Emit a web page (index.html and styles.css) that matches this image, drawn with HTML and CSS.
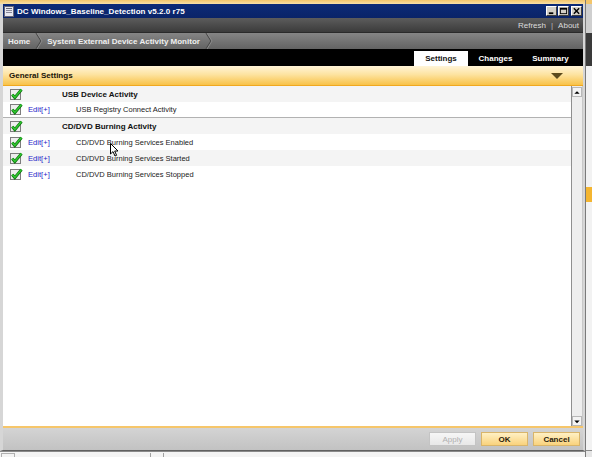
FILE: index.html
```html
<!DOCTYPE html>
<html>
<head>
<meta charset="utf-8">
<link rel="stylesheet" href="styles.css">
</head>
<body>
<div class="desk">
  <div class="main">
    <div class="topgap"></div>
    <div class="window">
      <div class="titlebar">
        <svg class="appicon" width="10" height="11" viewBox="0 0 10 11"><rect x="0.5" y="0.5" width="9" height="10" fill="#e8e8f0" stroke="#667"/><rect x="2" y="2" width="6" height="1" fill="#667"/><rect x="2" y="4" width="6" height="1" fill="#889"/><rect x="2" y="6" width="6" height="1" fill="#889"/></svg>
        <span class="title">DC Windows_Baseline_Detection v5.2.0 r75</span>
        <div class="controls">
          <span class="ctl"><svg width="10" height="9" viewBox="0 0 10 9"><rect x="2" y="6" width="5" height="2" fill="#000"/></svg></span>
          <span class="ctl"><svg width="10" height="9" viewBox="0 0 10 9"><rect x="1.5" y="1.5" width="7" height="6" fill="none" stroke="#000"/><rect x="1" y="1" width="8" height="2" fill="#000"/></svg></span>
          <span class="ctl close"><svg width="10" height="9" viewBox="0 0 10 9"><path d="M2 1.5 L8 7.5 M8 1.5 L2 7.5" stroke="#000" stroke-width="1.6"/></svg></span>
        </div>
      </div>
      <div class="toolbar">
        <span class="tlink">Refresh</span><span class="tsep">|</span><span class="tlink">About</span>
      </div>
      <div class="crumbs">
        <span class="crumb">Home</span>
        <svg class="chev" width="8" height="16" viewBox="0 0 8 16"><path d="M1 0 L6 8 L1 16" fill="none" stroke="#4a4a4a" stroke-width="1.2"/><path d="M2 0 L7 8 L2 16" fill="none" stroke="#8c8c8c" stroke-width="1"/></svg>
        <span class="crumb">System External Device Activity Monitor</span>
        <svg class="chev" width="8" height="16" viewBox="0 0 8 16"><path d="M1 0 L6 8 L1 16" fill="none" stroke="#4a4a4a" stroke-width="1.2"/><path d="M2 0 L7 8 L2 16" fill="none" stroke="#8c8c8c" stroke-width="1"/></svg>
      </div>
      <div class="tabbar">
        <span class="tab active">Settings</span>
        <span class="tab">Changes</span>
        <span class="tab">Summary</span>
      </div>
      <div class="sechead">
        <span class="sectitle">General Settings</span>
        <svg class="tri" width="12" height="6" viewBox="0 0 12 6"><path d="M0 0 L12 0 L6 6 Z" fill="#5b4a1c"/></svg>
      </div>
      <div class="content">
        <div class="list">
          <div class="row alt">
            <span class="cbox"><svg width="13" height="13" viewBox="0 0 13 13"><rect x="0.5" y="1.5" width="10" height="10" fill="#eeeeee" stroke="#7d7d7d"/><path d="M2.3 6.6 L4.8 9.6 L11.5 1.6" fill="none" stroke="#0e6e0e" stroke-width="3"/><path d="M2.3 6.6 L4.8 9.6 L11.5 1.6" fill="none" stroke="#2fc62f" stroke-width="1.6"/></svg></span>
            <span class="edit"></span>
            <span class="group">USB Device Activity</span>
          </div>
          <div class="row sep">
            <span class="cbox"><svg width="13" height="13" viewBox="0 0 13 13"><rect x="0.5" y="1.5" width="10" height="10" fill="#eeeeee" stroke="#7d7d7d"/><path d="M2.3 6.6 L4.8 9.6 L11.5 1.6" fill="none" stroke="#0e6e0e" stroke-width="3"/><path d="M2.3 6.6 L4.8 9.6 L11.5 1.6" fill="none" stroke="#2fc62f" stroke-width="1.6"/></svg></span>
            <span class="edit">Edit[+]</span>
            <span class="item">USB Registry Connect Activity</span>
          </div>
          <div class="row alt">
            <span class="cbox"><svg width="13" height="13" viewBox="0 0 13 13"><rect x="0.5" y="1.5" width="10" height="10" fill="#eeeeee" stroke="#7d7d7d"/><path d="M2.3 6.6 L4.8 9.6 L11.5 1.6" fill="none" stroke="#0e6e0e" stroke-width="3"/><path d="M2.3 6.6 L4.8 9.6 L11.5 1.6" fill="none" stroke="#2fc62f" stroke-width="1.6"/></svg></span>
            <span class="edit"></span>
            <span class="group">CD/DVD Burning Activity</span>
          </div>
          <div class="row">
            <span class="cbox"><svg width="13" height="13" viewBox="0 0 13 13"><rect x="0.5" y="1.5" width="10" height="10" fill="#eeeeee" stroke="#7d7d7d"/><path d="M2.3 6.6 L4.8 9.6 L11.5 1.6" fill="none" stroke="#0e6e0e" stroke-width="3"/><path d="M2.3 6.6 L4.8 9.6 L11.5 1.6" fill="none" stroke="#2fc62f" stroke-width="1.6"/></svg></span>
            <span class="edit">Edit[+]</span>
            <span class="item">CD/DVD Burning Services Enabled</span>
          </div>
          <div class="row alt">
            <span class="cbox"><svg width="13" height="13" viewBox="0 0 13 13"><rect x="0.5" y="1.5" width="10" height="10" fill="#eeeeee" stroke="#7d7d7d"/><path d="M2.3 6.6 L4.8 9.6 L11.5 1.6" fill="none" stroke="#0e6e0e" stroke-width="3"/><path d="M2.3 6.6 L4.8 9.6 L11.5 1.6" fill="none" stroke="#2fc62f" stroke-width="1.6"/></svg></span>
            <span class="edit">Edit[+]</span>
            <span class="item">CD/DVD Burning Services Started</span>
          </div>
          <div class="row">
            <span class="cbox"><svg width="13" height="13" viewBox="0 0 13 13"><rect x="0.5" y="1.5" width="10" height="10" fill="#eeeeee" stroke="#7d7d7d"/><path d="M2.3 6.6 L4.8 9.6 L11.5 1.6" fill="none" stroke="#0e6e0e" stroke-width="3"/><path d="M2.3 6.6 L4.8 9.6 L11.5 1.6" fill="none" stroke="#2fc62f" stroke-width="1.6"/></svg></span>
            <span class="edit">Edit[+]</span>
            <span class="item">CD/DVD Burning Services Stopped</span>
          </div>
          <svg class="cursor" width="9" height="14" viewBox="0 0 9 14"><path d="M0.5 0.5 L0.5 11 L3 8.6 L5 13 L6.6 12.3 L4.7 8 L8 8 Z" fill="#fff" stroke="#000" stroke-width="1"/></svg>
        </div>
        <div class="scrollbar">
          <span class="sbtn"><svg width="9" height="9" viewBox="0 0 9 9"><path d="M1.5 6 L7.5 6 L4.5 3 Z" fill="#000"/></svg></span>
          <span class="strack"></span>
          <span class="sbtn"><svg width="9" height="9" viewBox="0 0 9 9"><path d="M1.5 3.5 L7.5 3.5 L4.5 6.5 Z" fill="#000"/></svg></span>
        </div>
      </div>
      <div class="footer">
        <span class="btn disabled">Apply</span>
        <span class="btn">OK</span>
        <span class="btn">Cancel</span>
      </div>
    </div>
    <div class="bottomgap">
      <span class="bmark"></span>
      <span class="bmark2"></span>
    </div>
  </div>
  <div class="side">
    <div class="s1"></div>
    <div class="s2"></div>
    <div class="s3"></div>
    <div class="s4"></div>
    <div class="s5"></div>
    <div class="s6"></div>
    <div class="s7"></div>
  </div>
</div>
</body>
</html>
```

FILE: styles.css
```css
* { box-sizing: border-box; }
html, body { margin: 0; padding: 0; }
body {
  width: 592px;
  height: 457px;
  overflow: hidden;
  background: #ffffff;
  font-family: "Liberation Sans", Arial, sans-serif;
  font-size: 8px;
}
.desk {
  display: flex;
  width: 592px;
  height: 457px;
}
.main {
  width: 585px;
  display: flex;
  flex-direction: column;
}
.topgap {
  height: 4px;
  background: linear-gradient(#f3c56a, #f8dfa8);
}
.window {
  height: 447px;
  display: flex;
  flex-direction: column;
  border-left: 3px solid #d6d6d6;
  border-right: 2px solid #d6d6d6;
  border-bottom: 1px solid #606060;
  background: #fff;
}
.titlebar {
  height: 14px;
  background: linear-gradient(#0c2a78, #0a2468);
  display: flex;
  align-items: center;
  padding-left: 1px;
  padding-right: 1px;
}
.appicon { display: block; margin-right: 3px; }
.title {
  color: #fff;
  font-weight: bold;
  font-size: 8px;
  flex: 1;
  letter-spacing: 0.05px;
}
.controls { display: flex; gap: 1px; }
.ctl {
  width: 11px;
  height: 10px;
  background: #d4d0c8;
  border: 1px solid;
  border-color: #fff #404040 #404040 #fff;
  display: flex;
  align-items: center;
  justify-content: center;
}
.ctl svg { display: block; width: 9px; height: 8px; }
.close { margin-left: 1px; }
.toolbar {
  height: 15px;
  background: linear-gradient(#5c5c5c, #3b3b3b);
  border-bottom: 1px solid #2a2a2a;
  display: flex;
  align-items: center;
  justify-content: flex-end;
  padding-right: 4px;
  color: #dcdcdc;
  font-size: 8px;
}
.tsep { margin: 0 5px; color: #bdbdbd; }
.crumbs {
  height: 16px;
  background: linear-gradient(#858585, #636363);
  display: flex;
  align-items: center;
  padding-left: 5px;
}
.crumb {
  color: #f0f0f0;
  font-weight: bold;
  font-size: 8px;
}
.chev { display: block; margin: 0 4px 0 5px; }
.tabbar {
  height: 17px;
  background: #000;
  display: flex;
  justify-content: flex-end;
  align-items: flex-end;
  padding-right: 5px;
}
.tab {
  width: 55px;
  height: 15px;
  display: flex;
  align-items: center;
  justify-content: center;
  color: #fff;
  font-weight: bold;
  font-size: 8px;
}
.tab.active {
  width: 54px;
  background: #fff;
  color: #111;
}
.sechead {
  height: 20px;
  background: linear-gradient(#fff4d8 0%, #fde3a0 45%, #f8c248 100%);
  border-bottom: 1px solid #f0a820;
  display: flex;
  align-items: center;
  padding-left: 6px;
  padding-right: 20px;
}
.sectitle {
  flex: 1;
  font-weight: bold;
  color: #1a1408;
  font-size: 8px;
}
.tri { display: block; }
.content {
  flex: 1;
  display: flex;
  border-bottom: 2px solid #f6c66a;
  min-height: 0;
}
.list {
  flex: 1;
  position: relative;
  background: #fff;
}
.row {
  height: 16px;
  display: grid;
  grid-template-columns: 25px 34px 1fr;
  align-items: center;
  background: #fff;
}
.row.alt { background: #f4f4f4; }
.row.sep { border-bottom: 1px solid #b2b2b2; }
.cbox { padding-left: 7px; display: flex; align-items: center; }
.cbox svg { display: block; }
.edit {
  color: #2626c8;
  font-size: 7.6px;
}
.group {
  font-weight: bold;
  color: #111;
  font-size: 8px;
}
.item {
  padding-left: 14px;
  color: #222;
  font-size: 7.5px;
}
.cursor {
  position: absolute;
  left: 107px;
  top: 57px;
}
.scrollbar {
  width: 12px;
  display: flex;
  flex-direction: column;
  background: #eeeeee;
  border-left: 1px solid #8f8f8f;
  border-right: 1px solid #c8c8c8;
  padding-top: 1px;
}
.sbtn {
  height: 10px;
  background: #f4f4f4;
  border: 1px solid #b8b8b8;
  display: flex;
  align-items: center;
  justify-content: center;
}
.sbtn svg { display: block; }
.strack { flex: 1; }
.footer {
  height: 22px;
  background: linear-gradient(#d4d4d4, #c2c2c2);
  display: flex;
  align-items: center;
  justify-content: flex-end;
  gap: 5px;
  padding-right: 3px;
}
.btn {
  width: 47px;
  height: 14px;
  display: flex;
  align-items: center;
  justify-content: center;
  font-weight: bold;
  font-size: 8px;
  color: #2a200a;
  background: linear-gradient(#fff0c4, #f9d27c);
  border: 1px solid #d9b56a;
}
.btn.disabled {
  background: linear-gradient(#f6f6f6, #e8e8e8);
  border-color: #c4c4c4;
  color: #b0b0b0;
  font-weight: normal;
}
.bottomgap {
  flex: 1;
  position: relative;
  background: #f4f4f4;
  border-top: 1px solid #8a8a8a;
}
.bmark {
  position: absolute;
  left: 1px;
  top: 1px;
  width: 14px;
  height: 5px;
  border: 1px solid #b0b0b0;
}
.bmark2 {
  position: absolute;
  left: 150px;
  top: 1px;
  width: 14px;
  height: 5px;
  border-left: 1px solid #a0a0a0;
  border-right: 1px solid #a0a0a0;
}
.side {
  width: 7px;
  display: flex;
  flex-direction: column;
  border-left: 1px solid #7a7a7a;
}
.s1 { height: 4px; background: #f3c56a; }
.s2 { height: 29px; background: #cfcfcf; }
.s3 { height: 33px; background: #3a3a3a; }
.s4 { height: 121px; background: #f2f2f2; }
.s5 { height: 15px; background: #f4b530; }
.s6 { flex: 1; background: #f2f2f2; }
.s7 { height: 7px; background: #e6e6e6; border-top: 1px solid #8a8a8a; }
```
